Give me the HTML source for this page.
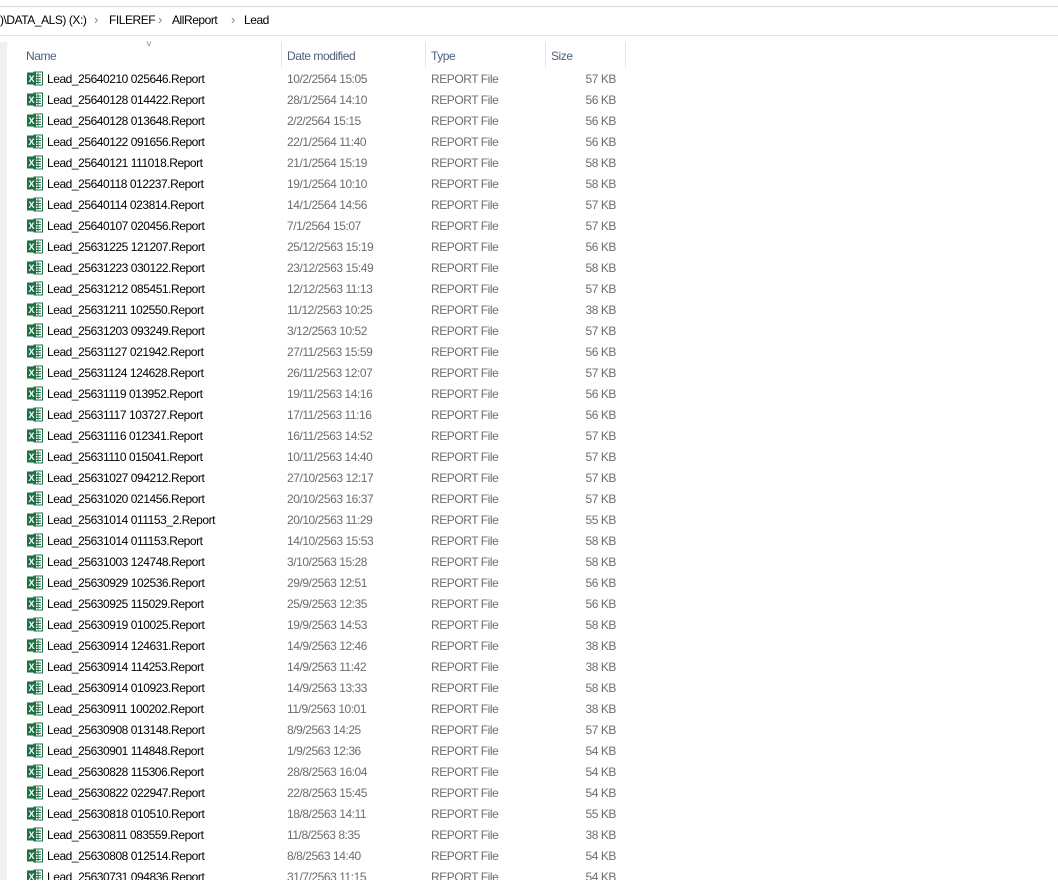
<!DOCTYPE html><html><head><style>
body{margin:0;width:1058px;height:891px;overflow:hidden;background:#fff;font-family:"Liberation Sans",sans-serif;font-size:12px;letter-spacing:-0.45px;color:#000;position:relative}
.top{position:absolute;top:0;left:0;right:0;height:6px;border-bottom:1px solid #d9d9d9}
.bc{position:absolute;top:7px;left:0;right:0;height:28px;border-bottom:1px solid #e5e5e5;font-size:12px}
.bc span{position:absolute;top:6px;white-space:nowrap}
.ch{color:#888;font-size:13px;letter-spacing:0}
.left{position:absolute;left:0;top:42px;width:7px;height:838px;background:#f0f0f0}
.hdr{position:absolute;top:42px;height:26px;left:0;right:0;color:#4c607a}
.hdr span{position:absolute;top:7px}
.sep{position:absolute;top:42px;height:26px;width:1px;background:#e5e5e5}
.row{position:absolute;left:0;right:0;height:21px}
.row span{position:absolute;top:4px;white-space:nowrap}
.n{left:47px;color:#000}
.d{left:287px;color:#6d6d6d}
.t{left:431px;color:#6d6d6d}
.s{right:442px;color:#6d6d6d}
.ic{position:absolute;left:27px;top:3px;width:16px;height:15px}
.bot{position:absolute;left:0;right:0;top:880px;height:11px;background:#fff}
</style></head><body>
<div class="top"></div>
<div class="bc"><span style="left:0">)\DATA_ALS) (X:)</span><span class="ch" style="left:94px;top:5px">›</span><span style="left:109px">FILEREF</span><span class="ch" style="left:158px;top:5px">›</span><span style="left:172px">AllReport</span><span class="ch" style="left:231px;top:5px">›</span><span style="left:244px">Lead</span></div>
<div class="left"></div>
<div class="hdr"><span style="left:146px;top:-3px;color:#888;font-size:10px">&#x2C5;</span><span style="left:26px">Name</span><span style="left:287px">Date modified</span><span style="left:431px">Type</span><span style="left:551px">Size</span></div>
<div class="sep" style="left:281px"></div><div class="sep" style="left:425px"></div><div class="sep" style="left:545px"></div><div class="sep" style="left:625px"></div>
<div id="rows"></div>
<div class="bot"></div>
<script>
var d=[["25640210 025646","10/2/2564 15:05",57],["25640128 014422","28/1/2564 14:10",56],["25640128 013648","2/2/2564 15:15",56],["25640122 091656","22/1/2564 11:40",56],["25640121 111018","21/1/2564 15:19",58],["25640118 012237","19/1/2564 10:10",58],["25640114 023814","14/1/2564 14:56",57],["25640107 020456","7/1/2564 15:07",57],["25631225 121207","25/12/2563 15:19",56],["25631223 030122","23/12/2563 15:49",58],["25631212 085451","12/12/2563 11:13",57],["25631211 102550","11/12/2563 10:25",38],["25631203 093249","3/12/2563 10:52",57],["25631127 021942","27/11/2563 15:59",56],["25631124 124628","26/11/2563 12:07",57],["25631119 013952","19/11/2563 14:16",56],["25631117 103727","17/11/2563 11:16",56],["25631116 012341","16/11/2563 14:52",57],["25631110 015041","10/11/2563 14:40",57],["25631027 094212","27/10/2563 12:17",57],["25631020 021456","20/10/2563 16:37",57],["25631014 011153_2","20/10/2563 11:29",55],["25631014 011153","14/10/2563 15:53",58],["25631003 124748","3/10/2563 15:28",58],["25630929 102536","29/9/2563 12:51",56],["25630925 115029","25/9/2563 12:35",56],["25630919 010025","19/9/2563 14:53",58],["25630914 124631","14/9/2563 12:46",38],["25630914 114253","14/9/2563 11:42",38],["25630914 010923","14/9/2563 13:33",58],["25630911 100202","11/9/2563 10:01",38],["25630908 013148","8/9/2563 14:25",57],["25630901 114848","1/9/2563 12:36",54],["25630828 115306","28/8/2563 16:04",54],["25630822 022947","22/8/2563 15:45",54],["25630818 010510","18/8/2563 14:11",55],["25630811 083559","11/8/2563 8:35",38],["25630808 012514","8/8/2563 14:40",54],["25630731 094836","31/7/2563 11:15",54]];
var ic='<svg class="ic" viewBox="0 0 16 15"><rect x="7" y="1" width="8.5" height="13" fill="#fff" stroke="#1e7145" stroke-width="1"/><path d="M9 4h5M9 6.5h5M9 9h5M9 11.5h5M11 2v11" stroke="#1e7145" stroke-width="1"/><rect x="0" y="1.5" width="9" height="12" fill="#1e7145"/><text x="4.5" y="11" font-size="9" font-weight="bold" fill="#fff" text-anchor="middle" font-family="Liberation Sans" letter-spacing="0">X</text></svg>';
var h='';d.forEach(function(r,i){h+='<div class="row" style="top:'+(68+i*21)+'px">'+ic+'<span class="n">Lead_'+r[0]+'.Report</span><span class="d">'+r[1]+'</span><span class="t">REPORT File</span><span class="s">'+r[2]+' KB</span></div>';});
document.getElementById('rows').innerHTML=h;
</script>
</body></html>
